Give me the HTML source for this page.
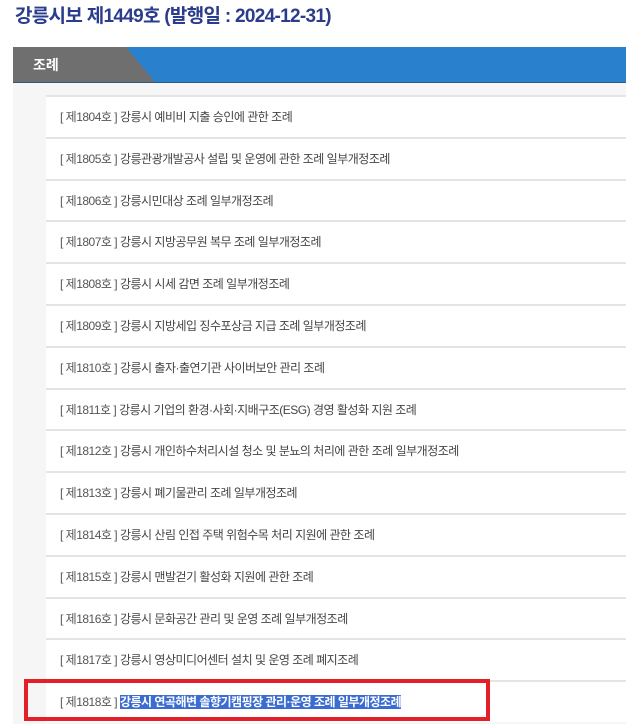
<!DOCTYPE html><html><head><meta charset="utf-8"><style>
body{margin:0;width:626px;height:724px;overflow:hidden;background:#fff;font-family:"Liberation Sans","Noto Sans CJK KR",sans-serif;position:relative}
h1{position:absolute;left:15px;top:2px;margin:0;font-size:19px;font-weight:bold;color:#2b3c8c;letter-spacing:-0.7px;line-height:30px}
.bar{position:absolute;left:13px;top:47px;width:613px;height:35px;background:#2980cc;border-bottom:1px solid #2b5a87}
.tab{position:absolute;left:0;top:0;height:35px;width:155px;background:#6f6f6f;clip-path:polygon(0 0,113px 0,142px 35px,0 35px)}
.tab span{position:absolute;left:20px;top:8px;color:#fff;font-size:14px;font-weight:bold}
.bg{position:absolute;left:13px;top:83px;width:613px;height:641px;background:#f6f6f6}
.list{position:absolute;left:46px;top:95px;width:580px}
.row{height:39.8px;background:#fff;border-top:2px solid #e4e4e4;font-size:12px;color:#444;line-height:40px;padding-left:14px;letter-spacing:-0.5px}
.row b{font-weight:normal;color:#555}
.hl{background:#3b6cd1;color:#fff;font-weight:bold;letter-spacing:-0.5px}
.red{position:absolute;left:24px;top:679px;width:458px;height:34px;border:4px solid #e3202a}
</style></head><body>
<h1>강릉시보 제1449호 (발행일 : 2024-12-31)</h1>
<div class="bar"><div class="tab"><span>조례</span></div></div>
<div class="bg"></div>
<div class="list">
<div class="row"><b>[ 제1804호 ]</b> 강릉시 예비비 지출 승인에 관한 조례</div>
<div class="row"><b>[ 제1805호 ]</b> 강릉관광개발공사 설립 및 운영에 관한 조례 일부개정조례</div>
<div class="row"><b>[ 제1806호 ]</b> 강릉시민대상 조례 일부개정조례</div>
<div class="row"><b>[ 제1807호 ]</b> 강릉시 지방공무원 복무 조례 일부개정조례</div>
<div class="row"><b>[ 제1808호 ]</b> 강릉시 시세 감면 조례 일부개정조례</div>
<div class="row"><b>[ 제1809호 ]</b> 강릉시 지방세입 징수포상금 지급 조례 일부개정조례</div>
<div class="row"><b>[ 제1810호 ]</b> 강릉시 출자·출연기관 사이버보안 관리 조례</div>
<div class="row"><b>[ 제1811호 ]</b> 강릉시 기업의 환경·사회·지배구조(ESG) 경영 활성화 지원 조례</div>
<div class="row"><b>[ 제1812호 ]</b> 강릉시 개인하수처리시설 청소 및 분뇨의 처리에 관한 조례 일부개정조례</div>
<div class="row"><b>[ 제1813호 ]</b> 강릉시 폐기물관리 조례 일부개정조례</div>
<div class="row"><b>[ 제1814호 ]</b> 강릉시 산림 인접 주택 위험수목 처리 지원에 관한 조례</div>
<div class="row"><b>[ 제1815호 ]</b> 강릉시 맨발걷기 활성화 지원에 관한 조례</div>
<div class="row"><b>[ 제1816호 ]</b> 강릉시 문화공간 관리 및 운영 조례 일부개정조례</div>
<div class="row"><b>[ 제1817호 ]</b> 강릉시 영상미디어센터 설치 및 운영 조례 폐지조례</div>
<div class="row"><b>[ 제1818호 ]</b> <span class="hl">강릉시 연곡해변 솔향기캠핑장 관리·운영 조례 일부개정조례</span></div>
</div>
<div class="red"></div>
</body></html>
